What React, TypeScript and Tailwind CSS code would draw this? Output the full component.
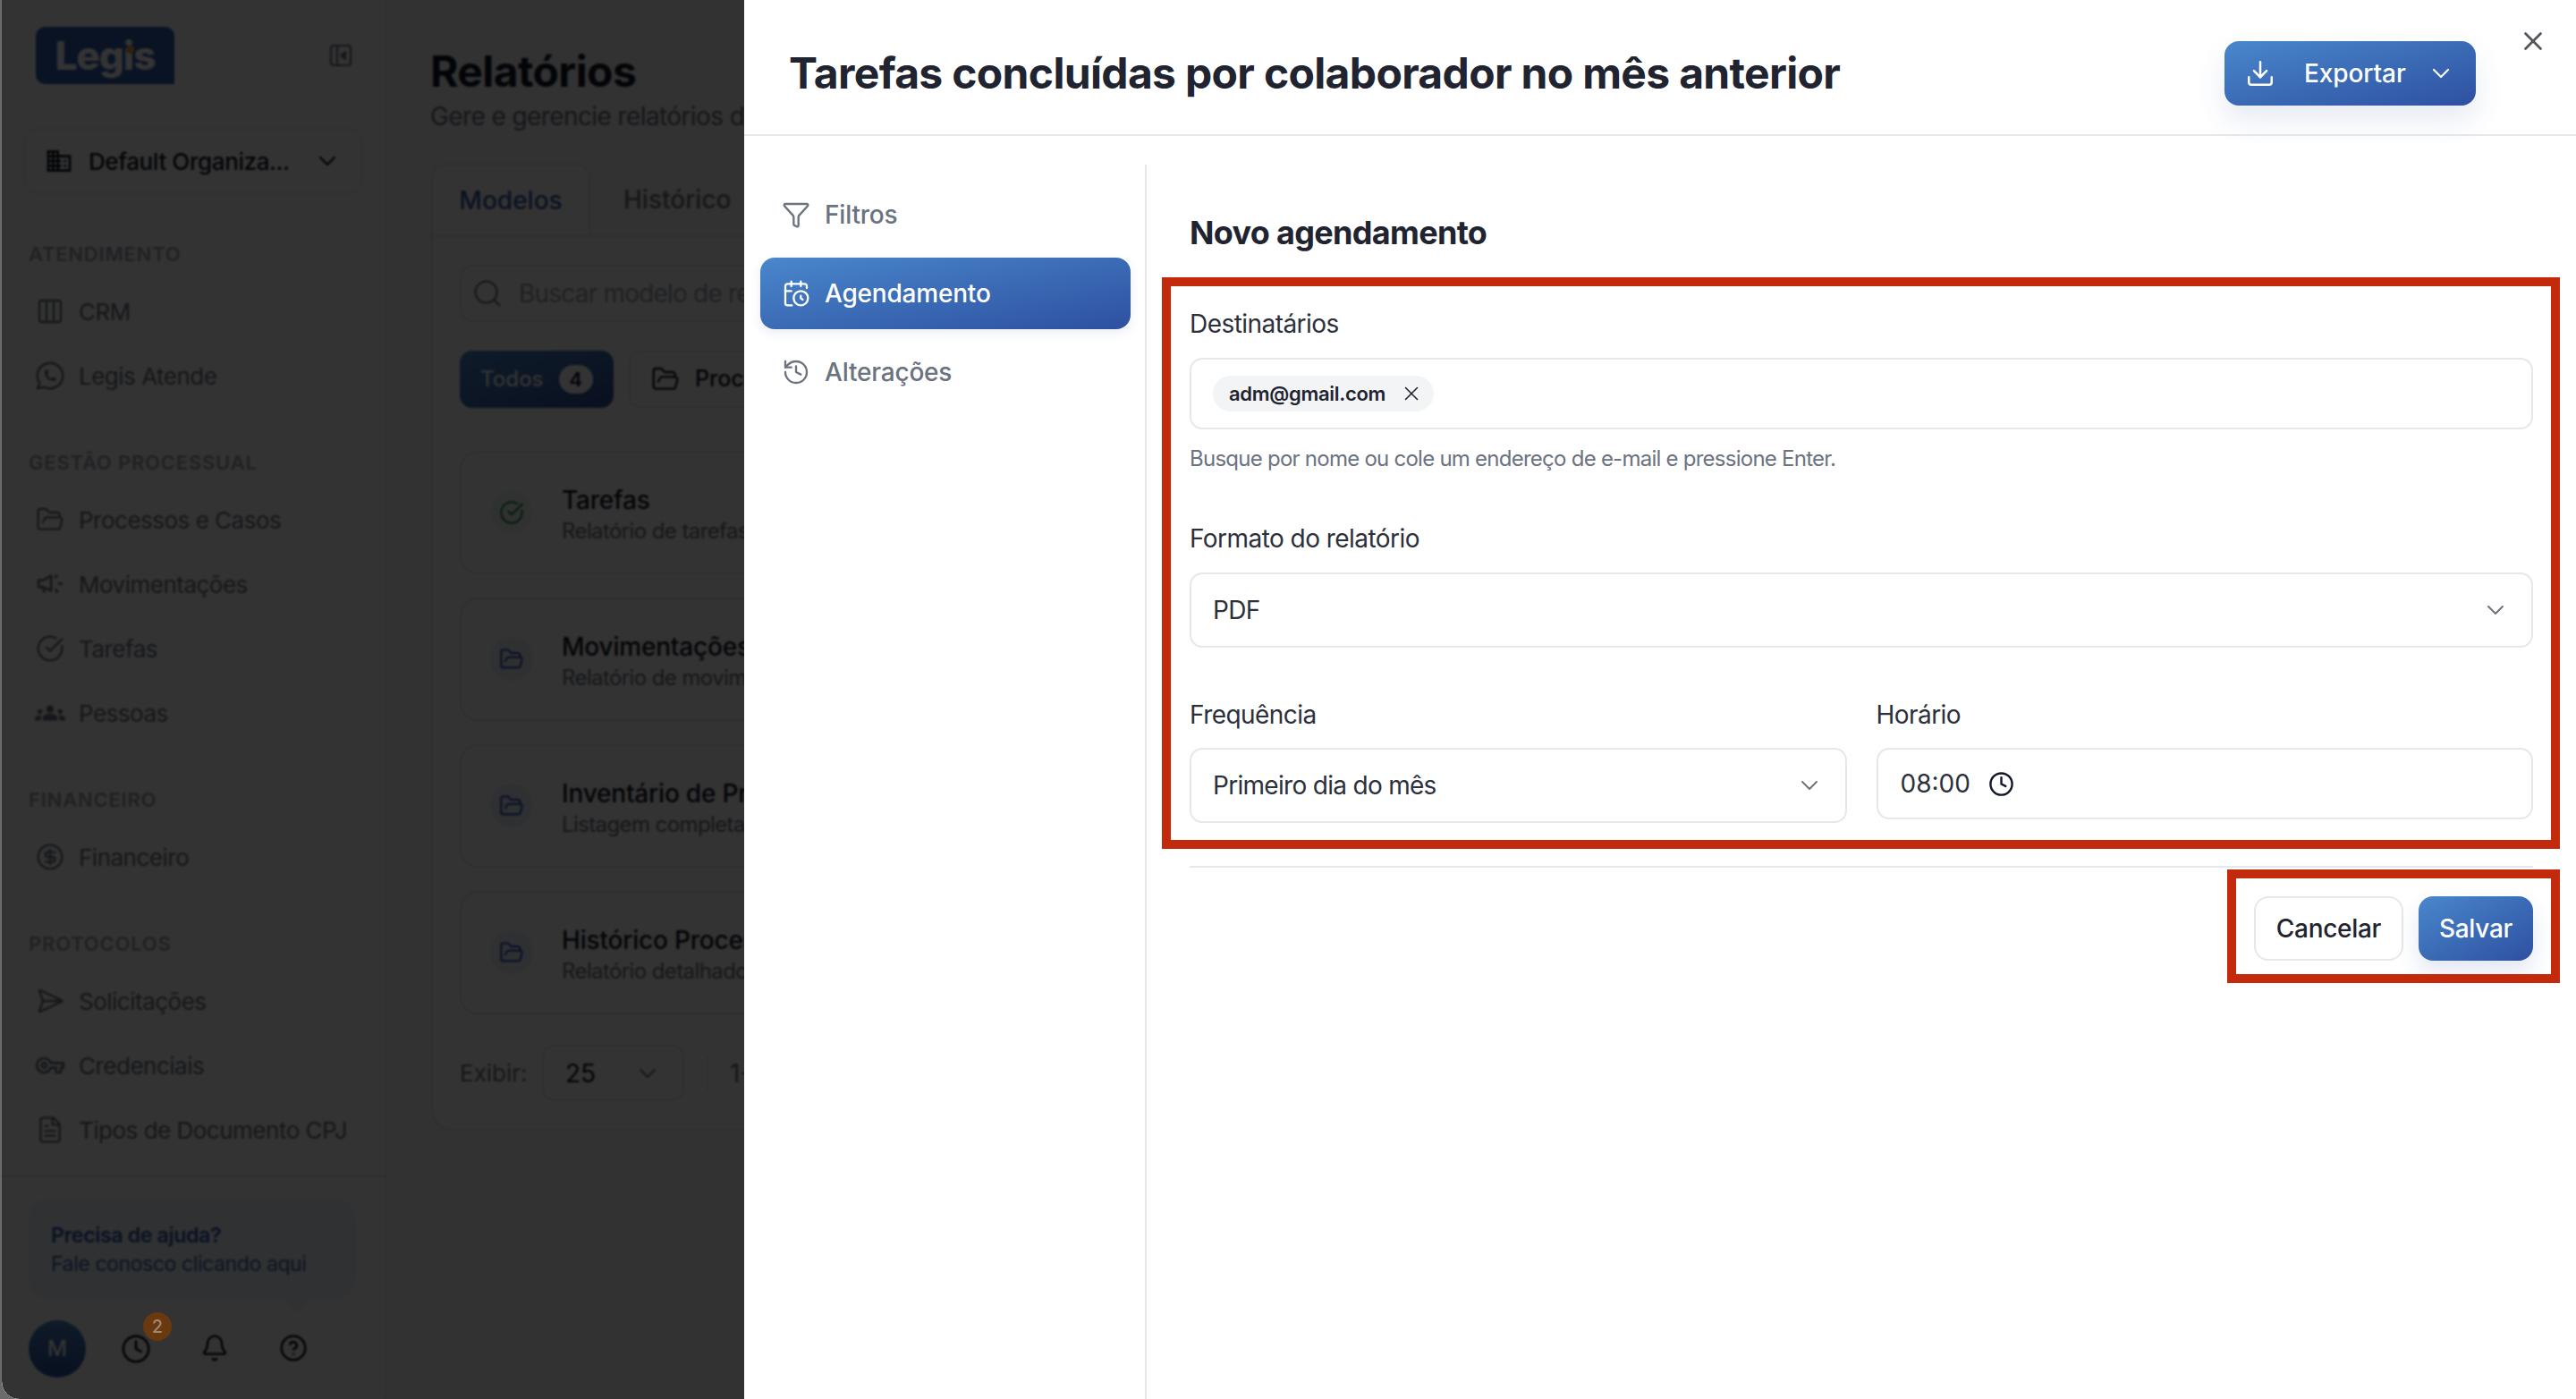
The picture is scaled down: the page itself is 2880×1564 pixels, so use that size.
import {
  Bell,
  CalendarClock,
  ChevronDown,
  CircleCheckBig,
  CircleDollarSign,
  CircleHelp,
  Clock,
  Columns3,
  Download,
  FileText,
  FolderOpen,
  Funnel,
  History,
  Search,
  SendHorizontal,
  X,
} from "lucide-react";
import { MdDomain, MdGroups, MdOutlineVpnKey } from "react-icons/md";
import { TbBrandWhatsapp } from "react-icons/tb";

const FONT = "font-['Inter',sans-serif]";

const Megaphone = () => (
  <svg width="30" height="30" viewBox="0 0 28 28" fill="none" stroke="currentColor" strokeWidth="2.6" strokeLinecap="round" strokeLinejoin="round">
    <path d="M2 10h5l8-5v16l-8-4H2z" />
    <path d="M6 17l2 5" />
    <path d="M21 5l-1.500 2M23 13.500h3M20 20l1.500 2" />
  </svg>
);

const CollapseIcon = () => (
  <svg width="26" height="26" viewBox="0 0 26 26" fill="none" stroke="currentColor" strokeWidth="2.2" strokeLinejoin="round">
    <rect x="2" y="2" width="22" height="22" rx="3" />
    <path d="M9 2v22" />
    <path d="M18 9l-5 4 5 4z" fill="currentColor" />
  </svg>
);

const sections = [
  {
    title: "Atendimento",
    items: [
      { label: "CRM", icon: <Columns3 size={32} strokeWidth={1.75} /> },
      { label: "Legis Atende", icon: <TbBrandWhatsapp size={38} strokeWidth={1.6} /> },
    ],
  },
  {
    title: "Gestão Processual",
    items: [
      { label: "Processos e Casos", icon: <FolderOpen size={32} strokeWidth={1.75} /> },
      { label: "Movimentações", icon: <Megaphone /> },
      { label: "Tarefas", icon: <CircleCheckBig size={32} strokeWidth={1.75} /> },
      { label: "Pessoas", icon: <MdGroups size={34} /> },
    ],
  },
  {
    title: "Financeiro",
    items: [{ label: "Financeiro", icon: <CircleDollarSign size={32} strokeWidth={1.75} /> }],
  },
  {
    title: "Protocolos",
    items: [
      { label: "Solicitações", icon: <SendHorizontal size={32} strokeWidth={1.75} /> },
      { label: "Credenciais", icon: <MdOutlineVpnKey size={32} /> },
      { label: "Tipos de Documento CPJ", icon: <FileText size={32} strokeWidth={1.75} /> },
    ],
  },
];

const reports = [
  { title: "Tarefas", sub: "Relatório de tarefas por colaborador", done: true },
  { title: "Movimentações", sub: "Relatório de movimentações", done: false },
  { title: "Inventário de Processos", sub: "Listagem completa de processos", done: false },
  { title: "Histórico Processual", sub: "Relatório detalhado do processo", done: false },
];

const Sidebar = () => (
  <aside className="flex h-full w-[430px] shrink-0 flex-col border-r-2 border-[#e5e7eb] bg-white">
    <div className="flex shrink-0 items-center justify-between pl-[38px] pr-[36px] pt-[30px]">
      <div className="relative flex h-[64px] w-[155px] items-center justify-center rounded-[10px] rounded-br-none bg-[#3460b6]">
        <span className="text-[44px] font-extrabold leading-none tracking-[-1px] text-white">Legis</span>
        <span className="absolute left-[101px] top-[21px] h-[9px] w-[9px] rounded-full bg-[#e0b030]" />
      </div>
      <span className="text-[#6b7280]">
        <CollapseIcon />
      </span>
    </div>

    <div className="mx-[24px] mb-[53px] mt-[49px] flex h-[74px] shrink-0 items-center rounded-[16px] border-2 border-[#eef0f3] pl-[22px] pr-[22px] text-[#111827]">
      <MdDomain size={32} />
      <span className="ml-[17px] flex-1 text-[26px] font-medium tracking-[-0.4px]">Default Organiza...</span>
      <ChevronDown size={32} strokeWidth={1.75} />
    </div>

    <nav className="flex shrink-0 flex-col">
      {sections.map((section) => (
        <div key={section.title} className="mb-[47px] last:mb-0">
          <div className="mb-[14px] h-7 pl-[30px] text-[22px] font-semibold uppercase leading-7 tracking-[0.8px] text-[#9ca3af]">
            {section.title}
          </div>
          {section.items.map((item) => (
            <div key={item.label} className="flex h-[72px] items-center text-[#6b7280]">
              <span className="flex w-[86px] shrink-0 items-center justify-center pl-[22px]">{item.icon}</span>
              <span className="text-[26px] tracking-[-0.5px]">{item.label}</span>
            </div>
          ))}
        </div>
      ))}
    </nav>

    <div className="mt-auto flex h-[250px] shrink-0 flex-col border-t-2 border-[#e5e7eb] pl-[30px] pt-[24px]">
      <div className="relative h-[112px] w-[366px] rounded-[22px] bg-[#eef4fb] pl-[25px] pt-[25px]">
        <div className="text-[23px] font-semibold leading-[32px] tracking-[-0.3px] text-[#2f5aa8]">Precisa de ajuda?</div>
        <div className="text-[23px] leading-[32px] tracking-[-0.4px] text-[#3f68b0]">Fale conosco clicando aqui</div>
        <span className="absolute -bottom-[11px] left-[290px] h-[22px] w-[22px] rotate-45 bg-[#eef4fb]" />
      </div>
      <div className="mt-[24px] flex items-center">
        <div className="flex h-[64px] w-[64px] items-center justify-center rounded-full bg-linear-to-b from-[#4a87cc] to-[#2e50a0] text-[24px] font-medium text-white">
          M
        </div>
        <div className="ml-3 flex text-black">
          <div className="relative flex w-[88px] justify-center">
            <Clock size={34} strokeWidth={1.75} />
            <span className="absolute -top-[24px] left-[52px] z-10 flex h-[32px] w-[32px] items-center justify-center rounded-full bg-[#693a10] text-[20px] font-medium text-[#a5866a]">
              2
            </span>
          </div>
          <div className="flex w-[88px] justify-center">
            <Bell size={32} strokeWidth={1.75} />
          </div>
          <div className="flex w-[88px] justify-center">
            <CircleHelp size={32} strokeWidth={1.75} />
          </div>
        </div>
      </div>
    </div>
  </aside>
);

const MainPage = () => (
  <main className="h-full flex-1 overflow-hidden bg-[#f8f8f9] pl-[50px] pt-[52px]">
    <h1 className="-ml-[1px] text-[48px] font-bold leading-[56px] tracking-[-0.6px] text-[#111827]">Relatórios</h1>
    <p className="-ml-[1px] mt-[4px] whitespace-nowrap text-[28px] leading-[36px] tracking-[-0.6px] text-[#6b7280]">Gere e gerencie relatórios do sistema</p>

    <div className="mt-[35px] flex h-[80px] items-end">
      <div className="flex h-[80px] w-[178px] items-center justify-center rounded-t-[16px] border-2 border-b-0 border-[#e5e7eb] bg-white text-[28px] font-medium text-[#2f5aa8]">
        Modelos
      </div>
      <div className="ml-[37px] flex h-[80px] items-center text-[28px] font-medium text-[#6b7280]">Histórico</div>
    </div>

    <section className="h-[1001px] w-[2300px] rounded-b-[24px] rounded-tr-[24px] border-2 border-[#e5e7eb] bg-white px-[30px] pt-[31px]">
      <div className="flex h-[64px] items-center rounded-[14px] border-2 border-[#e5e7eb] pl-[11px] text-[#9ca3af]">
        <Search size={36} strokeWidth={1.5} className="text-[#6b7280]" />
        <span className="ml-[17px] text-[28px] tracking-[-0.8px]">Buscar modelo de relatório</span>
      </div>

      <div className="mt-[32px] flex gap-[17px]">
        <div className="flex h-[64px] w-[172px] items-center gap-[17px] rounded-[14px] bg-linear-to-br from-[#4a87cc] to-[#2e50a0] pl-[23px] text-[24px] font-medium text-white">
          Todos
          <span className="flex h-[32px] w-[38px] items-center justify-center rounded-full bg-white text-[22px] font-semibold text-[#111827]">4</span>
        </div>
        <div className="flex h-[64px] w-[320px] items-center gap-[17px] rounded-[14px] border-2 border-[#e5e7eb] pl-[23px] text-[25px] font-medium text-[#111827]">
          <FolderOpen size={32} strokeWidth={1.75} />
          Processos
        </div>
      </div>

      <div className="mt-[48px] flex flex-col gap-[26px]">
        {reports.map((report) => (
          <div key={report.title} className="flex h-[138px] items-center rounded-[20px] border-2 border-[#e5e7eb] pl-[32px]">
            <div className={report.done ? "flex h-[48px] w-[48px] items-center justify-center rounded-full bg-[#ecf8ee] text-[#16803c]" : "flex h-[48px] w-[48px] items-center justify-center rounded-full bg-[#e9eefb] text-[#2547b0]"}>
              {report.done ? <CircleCheckBig size={28} strokeWidth={1.75} /> : <FolderOpen size={28} strokeWidth={1.75} />}
            </div>
            <div className="ml-[32px] pt-[5px]">
              <div className="text-[28px] font-medium leading-[36px] tracking-[-0.2px] text-[#111827]">{report.title}</div>
              <div className="whitespace-nowrap text-[24px] leading-[34px] tracking-[-0.6px] text-[#6b7280]">{report.sub}</div>
            </div>
          </div>
        ))}
      </div>

      <div className="mt-[34px] flex items-center">
        <span className="w-[92px] text-[26px] text-[#6b7280]">Exibir:</span>
        <div className="flex h-[63px] w-[159px] items-center justify-between rounded-[14px] border-2 border-[#e5e7eb] pl-[24px] pr-[23px] text-[28px] text-[#111827]">
          25
          <ChevronDown size={32} strokeWidth={1.5} className="text-[#6b7280]" />
        </div>
        <span className="ml-[25px] h-[40px] w-[2px] bg-[#e5e7eb]" />
        <span className="ml-[24px] text-[28px] text-[#6b7280]">1-4 de 4</span>
      </div>
    </section>
  </main>
);

const AnnotationBox = ({ className }: { className: string }) => (
  <span className={`pointer-events-none absolute border-[10px] border-[#c32a0b] ${className}`} />
);

const FieldLabel = ({ children }: { children: string }) => (
  <div className="text-[28px] leading-[32px] tracking-[-0.55px] text-[#2b303b]">{children}</div>
);

const Drawer = () => (
  <div className="absolute inset-y-0 left-[830px] right-0 z-20 flex flex-col bg-white">
    <header className="relative flex h-[152px] shrink-0 items-center border-b-2 border-[#e5e7eb] pl-[50px]">
      <h2 className="flex-1 pt-[14px] text-[48px] font-bold leading-[56px] tracking-[-0.67px] text-[#1f2430]">
        Tarefas concluídas por colaborador no mês anterior
      </h2>
      <div className="mr-[112px] mt-[14px] flex h-[72px] w-[281px] items-center rounded-[16px] bg-linear-to-br from-[#4a87cc] to-[#2e50a0] pl-[23px] text-[28px] font-medium tracking-[-0.1px] text-white shadow-[0_16px_32px_rgba(46,80,160,0.12)]">
        <Download size={34} strokeWidth={1.75} />
        <span className="ml-[32px]">Exportar</span>
        <ChevronDown size={32} strokeWidth={1.6} className="ml-[23px]" />
      </div>
      <X size={34} strokeWidth={1.9} className="absolute right-[31px] top-[29px] text-[#52525b]" />
    </header>

    <div className="mt-[32px] flex flex-1">
      <nav className="flex w-[450px] shrink-0 flex-col gap-[8px] border-r-2 border-[#e5e7eb] pl-[18px] pr-[16px] pt-[16px] text-[28px] font-medium tracking-[-0.2px]">
        <div className="flex h-[80px] items-center gap-[16px] pl-[24px] text-[#6b7280]">
          <Funnel size={32} strokeWidth={1.75} />
          Filtros
        </div>
        <div className="flex h-[80px] items-center gap-[16px] rounded-[16px] bg-linear-to-br from-[#4a87cc] to-[#2e50a0] pl-[24px] text-white shadow-[0_4px_12px_rgba(46,80,160,0.1)]">
          <CalendarClock size={32} strokeWidth={1.75} />
          Agendamento
        </div>
        <div className="flex h-[80px] items-center gap-[16px] pl-[24px] text-[#6b7280]">
          <History size={32} strokeWidth={1.75} />
          Alterações
        </div>
      </nav>

      <div className="flex-1 pl-[48px] pr-[48px] pt-[54px]">
        <h3 className="h-[44px] text-[36px] font-bold leading-[44px] tracking-[-0.68px] text-[#1f2430]">Novo agendamento</h3>

        <div className="relative mt-[64px]">
          <AnnotationBox className="-bottom-[29px] -left-[31px] -right-[30px] -top-[36px]" />
          <FieldLabel>Destinatários</FieldLabel>
          <div className="mt-[22px] flex h-[80px] items-center rounded-[14px] border-2 border-[#e5e7eb] pl-[24px]">
            <div className="flex h-[40px] w-[247px] items-center rounded-full bg-[#f3f4f6] pl-[18px] text-[22px] font-semibold tracking-[-0.3px] text-[#1f2430]">
              adm@gmail.com
              <X size={26} strokeWidth={1.5} className="ml-[16px]" />
            </div>
          </div>
          <p className="mt-[17px] text-[24px] leading-[32px] tracking-[-0.75px] text-[#6b7280]">
            Busque por nome ou cole um endereço de e-mail e pressione Enter.
          </p>

          <div className="mt-[57px]">
            <FieldLabel>Formato do relatório</FieldLabel>
          </div>
          <div className="mt-[22px] flex h-[84px] items-center justify-between rounded-[14px] border-2 border-[#e5e7eb] pl-[24px] pr-[24px] text-[28px] tracking-[-0.7px] text-[#2b303b]">
            PDF
            <ChevronDown size={32} strokeWidth={1.5} className="text-[#71717a]" />
          </div>

          <div className="mt-[59px] grid grid-cols-2 items-start gap-x-[33px]">
            <div>
              <FieldLabel>Frequência</FieldLabel>
              <div className="mt-[21px] flex h-[84px] items-center justify-between rounded-[14px] border-2 border-[#e5e7eb] pl-[24px] pr-[24px] text-[28px] tracking-[-0.7px] text-[#2b303b]">
                Primeiro dia do mês
                <ChevronDown size={32} strokeWidth={1.5} className="text-[#71717a]" />
              </div>
            </div>
            <div>
              <FieldLabel>Horário</FieldLabel>
              <div className="mt-[21px] flex h-[80px] items-center rounded-[14px] border-2 border-[#e5e7eb] pl-[25px] text-[28px] text-[#2b303b]">
                08:00
                <Clock size={29} strokeWidth={2} className="ml-[20px] text-[#111827]" />
              </div>
            </div>
          </div>
        </div>

        <div className="mt-[48px] h-[2px] bg-[#e5e7eb]" />

        <div className="mt-[32px] flex justify-end">
          <div className="relative flex gap-[17px]">
            <AnnotationBox className="-bottom-[25px] -left-[30px] -right-[30px] -top-[30px]" />
            <div className="flex h-[72px] w-[167px] items-center justify-center rounded-[16px] border-2 border-[#e5e7eb] text-[28px] font-medium tracking-[-0.3px] text-[#1f2430]">
              Cancelar
            </div>
            <div className="flex h-[72px] w-[128px] items-center justify-center rounded-[16px] bg-linear-to-br from-[#4a87cc] to-[#2e50a0] text-[28px] font-medium tracking-[-0.3px] text-white shadow-[0_12px_24px_rgba(46,80,160,0.14)]">
              Salvar
            </div>
          </div>
        </div>
      </div>
    </div>
  </div>
);

export default function App() {
  return (
    <div className={`h-[1564px] w-[2880px] overflow-hidden bg-[#6b6b6b] pl-[2px] ${FONT}`}>
      <div className="relative flex h-full w-full overflow-hidden rounded-bl-[20px]">
        <Sidebar />
        <MainPage />
        <div className="absolute inset-0 bg-black/80 backdrop-blur-[1px]" />
        <Drawer />
      </div>
    </div>
  );
}
